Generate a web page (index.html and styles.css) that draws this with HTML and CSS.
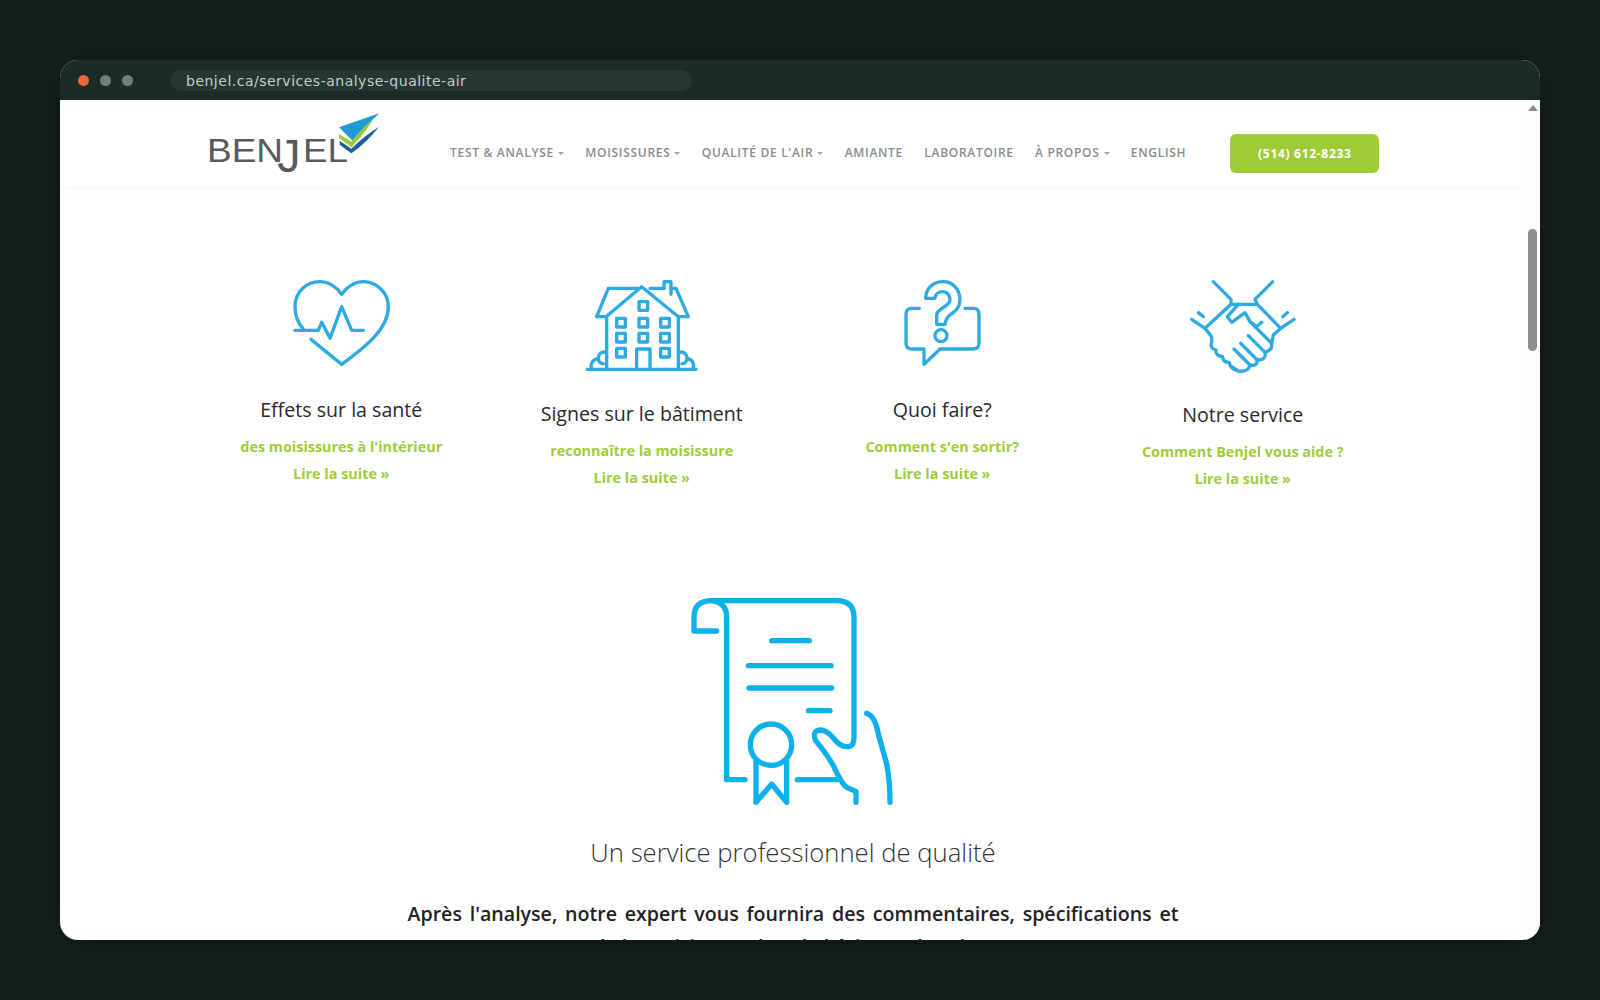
FILE: index.html
```html
<!DOCTYPE html>
<html lang="fr">
<head>
  <meta charset="UTF-8" />
  <title>Benjel - Services analyse qualité de l'air</title>
  <link rel="stylesheet" href="styles.css">
</head>
<body>
  <div class="window">
    <div class="titlebar">
      <span class="dot dot-orange"></span>
      <span class="dot"></span>
      <span class="dot"></span>
      <div class="urlbar">benjel.ca/services-analyse-qualite-air</div>
    </div>

    <div class="viewport">
      <div class="page">
        <header class="header">
          <svg class="logo" viewBox="0 0 600 228">
            <text class="logo-text" x="51" y="156" textLength="228" lengthAdjust="spacingAndGlyphs">BEN</text>
            <text class="logo-j" x="262" y="186">J</text>
            <text class="logo-text" x="339" y="156" textLength="135" lengthAdjust="spacingAndGlyphs">EL</text>
            <path fill="#1f9ad6" d="M447 52 L568 10 Q525 48 488 92 Z"/>
            <path fill="#9ac93b" d="M447 72 L484 95 Q512 58 550 28 Q525 70 484 112 L447 84 Z"/>
            <path fill="#1c5f99" d="M449 92 L484 116 Q520 80 567 50 Q530 98 484 130 L449 104 Z"/>
          </svg>
          <nav class="nav">
            <a>TEST &amp; ANALYSE<span class="caret"></span></a>
            <a>MOISISSURES<span class="caret"></span></a>
            <a>QUALITÉ DE L'AIR<span class="caret"></span></a>
            <a>AMIANTE</a>
            <a>LABORATOIRE</a>
            <a>À PROPOS<span class="caret"></span></a>
            <a>ENGLISH</a>
          </nav>
          <a class="phone">(514) 612-8233</a>
        </header>

        <section class="cards">
          <div class="card">
            <svg class="icon icon-heart" viewBox="0 0 426 315">
              <path d="M100 192 C85 175 75 150 75 125 C75 80 110 50 150 50 C175 50 200 65 215 88 C230 65 255 50 280 50 C322 50 355 85 355 125 C355 195 280 250 215 298 L123 223"/>
              <path d="M75 196 H145 L155 172 L180 220 L215 125 L245 196 H280"/>
            </svg>
            <h3>Effets sur la santé</h3>
            <a>des moisissures à l'intérieur</a>
            <a>Lire la suite »</a>
          </div>

          <div class="card">
            <svg class="icon icon-house" viewBox="0 0 432 327">
              <path d="M80 155 L115 70 H205 M240 70 H282 M303 70 H318 L355 155 H325 M80 155 H108 L215 65 L325 155 M110 155 V312 M325 155 V312 M52 313 H378"/>
              <path d="M282 70 V50 H303 V88"/>
              <path d="M200 312 V252 H240 V312"/>
              <rect x="207" y="110" width="26" height="26"/>
              <rect x="140" y="160" width="26" height="26"/>
              <rect x="207" y="160" width="26" height="26"/>
              <rect x="272" y="160" width="26" height="26"/>
              <rect x="140" y="205" width="26" height="26"/>
              <rect x="207" y="205" width="26" height="26"/>
              <rect x="272" y="205" width="26" height="26"/>
              <rect x="140" y="250" width="26" height="26"/>
              <rect x="272" y="250" width="26" height="26"/>
              <path d="M108 262 C95 258 85 268 85 280 C70 282 58 298 66 312 M85 280 C85 290 92 296 100 296"/>
              <path d="M328 262 C341 258 351 268 351 280 C366 282 376 298 368 312 M351 280 C351 290 344 296 336 296"/>
            </svg>
            <h3>Signes sur le bâtiment</h3>
            <a>reconnaître la moisissure</a>
            <a>Lire la suite »</a>
          </div>

          <div class="card">
            <svg class="icon icon-question" viewBox="0 0 372 315">
              <path d="M137 100 C137 70 160 50 190 50 C220 50 240 75 240 105 C240 130 222 140 210 150 C200 158 196 165 195 178 H170 V150 C170 130 210 125 210 105 C210 90 200 80 190 80 C175 80 165 88 165 100 Z"/>
              <circle cx="183" cy="212" r="18"/>
              <path d="M118 130 H95 Q78 130 78 148 V235 Q78 252 95 252 H132 V298 L180 252 H280 Q297 252 297 235 V148 Q297 130 280 130 H255"/>
            </svg>
            <h3>Quoi faire?</h3>
            <a>Comment s'en sortir?</a>
            <a>Lire la suite »</a>
          </div>

          <div class="card">
            <svg class="icon icon-hands" viewBox="0 0 438 330">
              <path d="M130 50 L183 103 V118 H262 L255 103 L308 50"/>
              <path d="M65 163 L105 190 L183 118 M85 143 L100 155"/>
              <path d="M372 163 L332 190 L262 118 M352 143 L338 155"/>
              <path d="M205 118 L172 155 L185 172 L225 143 L240 170 L260 185 L275 172 M240 170 L305 235"/>
              <path d="M235 212 L285 262 M212 235 L262 285 M192 252 L240 300"/>
              <path d="M332 190 L310 210 L305 235 Q308 255 285 262 Q290 285 262 285 Q262 305 240 300 Q235 322 205 318 L185 305"/>
              <path d="M105 190 L125 215 V232 M125 232 Q118 250 138 255 Q135 272 158 275 Q158 292 178 292 Q180 312 205 318"/>
            </svg>
            <h3>Notre service</h3>
            <a>Comment Benjel vous aide ?</a>
            <a>Lire la suite »</a>
          </div>
        </section>

        <section class="quality">
          <svg class="cert" viewBox="0 0 738 705">
            <path d="M140 141 H72 V100 Q72 50 125 50 H500 Q552 50 552 100 V460 Q552 490 530 488 Q510 488 490 462 Q470 438 450 438 Q425 440 437 470 Q470 510 490 545 Q515 600 530 610 L558 622 V655"/>
            <path d="M125 50 Q170 55 170 100 V587 H225"/>
            <path d="M382 587 H505 M305 170 H418 M235 245 H483 M237 312 H485 M415 380 H480"/>
            <circle cx="303" cy="482" r="62"/>
            <path d="M258 530 V655 L305 600 L350 655 V530"/>
            <path d="M590 388 Q615 395 625 450 L650 540 Q660 590 660 655"/>
          </svg>
          <h2>Un service professionnel de qualité</h2>
          <p>Après l'analyse, notre expert vous fournira des commentaires, spécifications et de la moisissure dans le bâtiment à traiter</p>
        </section>
      </div>

      <div class="scrollbar">
        <span class="scroll-up"></span>
        <span class="scroll-thumb"></span>
      </div>
    </div>
  </div>
</body>
</html>
```

FILE: styles.css
```css
html, body {
  height: 100%;
}

body {
  margin: 0;
  padding: 60px;
  box-sizing: border-box;
  background: #15201d;
  font-family: 'Open Sans', sans-serif;
}

.window {
  height: 880px;
  display: flex;
  flex-direction: column;
  border-radius: 18px;
  overflow: hidden;
  background: #fff;
  box-shadow: 0 0 40px rgba(0, 0, 0, 0.45);
}

.titlebar {
  height: 40px;
  flex: none;
  display: flex;
  align-items: center;
  padding-left: 18px;
  background: #1c2b27;
}

.dot {
  width: 11px;
  height: 11px;
  margin-right: 11px;
  border-radius: 50%;
  background: #6f8079;
}

.dot-orange {
  background: #e96a35;
}

.urlbar {
  width: 506px;
  height: 21px;
  margin-left: 26px;
  padding-left: 16px;
  border-radius: 11px;
  background: #263733;
  color: #c4cfca;
  font-family: 'DejaVu Sans', sans-serif;
  font-size: 14px;
  letter-spacing: 0.5px;
  line-height: 23px;
}

.viewport {
  flex: 1;
  min-height: 0;
  display: flex;
}

.page {
  flex: 1;
  min-width: 0;
  overflow: hidden;
}

.header {
  height: 86px;
  display: flex;
  align-items: flex-start;
  padding-left: 130px;
  box-shadow: 0 4px 14px rgba(0, 0, 0, 0.03);
}

.logo {
  width: 200px;
  height: 76px;
  flex: none;
  margin-top: 10px;
}

.logo-text {
  font-family: 'Liberation Sans', sans-serif;
  font-size: 100px;
  fill: #5a5a5c;
}

.logo-j {
  font-family: 'Liberation Sans', sans-serif;
  font-size: 140px;
  fill: #5a5a5c;
}

.nav {
  display: flex;
  gap: 21.3px;
  margin-left: 60px;
  padding-top: 44px;
}

.nav a {
  color: #8b8b8b;
  font-size: 12px;
  font-weight: 600;
  letter-spacing: 0.7px;
  line-height: 18px;
}

.caret {
  display: inline-block;
  margin-left: 4px;
  vertical-align: 2px;
  border-left: 3px solid transparent;
  border-right: 3px solid transparent;
  border-top: 3px solid #a5a5a5;
}

.phone {
  width: 149px;
  height: 39px;
  margin-top: 34px;
  margin-left: 44px;
  border-radius: 6px;
  background: #a0cd37;
  color: #fff;
  font-size: 12px;
  font-weight: 700;
  letter-spacing: 0.7px;
  line-height: 39px;
  text-align: center;
}

.cards {
  display: grid;
  grid-template-columns: repeat(4, 300.5px);
  margin-top: 79px;
  margin-left: 131px;
  align-items: start;
}

.card {
  display: flex;
  flex-direction: column;
  align-items: center;
}

.card a {
  color: #a0cd37;
  font-size: 14.4px;
  font-weight: 700;
  line-height: 27px;
}

.card h3 {
  margin: 27px 0 10px;
  color: #2a2a2a;
  font-size: 19.6px;
  font-weight: 400;
  line-height: 26px;
}

.icon {
  display: block;
  fill: none;
  stroke: #2daae1;
  stroke-width: 10;
  stroke-linecap: round;
  stroke-linejoin: round;
}

.icon-heart {
  width: 142px;
  height: 105px;
}

.icon-house {
  width: 144px;
  height: 109px;
}

.icon-question {
  width: 124px;
  height: 105px;
}

.icon-hands {
  width: 146px;
  height: 110px;
}

.quality {
  display: flex;
  flex-direction: column;
  align-items: center;
  margin-top: 92px;
}

.cert {
  display: block;
  width: 246px;
  height: 235px;
  fill: none;
  stroke: #0db1ea;
  stroke-width: 16;
  stroke-linecap: round;
  stroke-linejoin: round;
}

.quality h2 {
  margin: 16px 0 26px;
  color: #333;
  font-size: 25.7px;
  font-weight: 300;
  line-height: 36px;
}

.quality p {
  width: 771px;
  margin: 0;
  color: #222;
  font-size: 19.6px;
  font-weight: 600;
  line-height: 33px;
  text-align: justify;
  text-align-last: center;
}

.scrollbar {
  width: 14px;
  flex: none;
  position: relative;
  background: #fdfdfd;
}

.scroll-up {
  position: absolute;
  top: 5px;
  left: 2px;
  border-left: 5px solid transparent;
  border-right: 5px solid transparent;
  border-bottom: 6px solid #8e8e8e;
}

.scroll-thumb {
  position: absolute;
  top: 129px;
  left: 2px;
  width: 9px;
  height: 122px;
  border-radius: 5px;
  background: #8e8e8e;
}
```
